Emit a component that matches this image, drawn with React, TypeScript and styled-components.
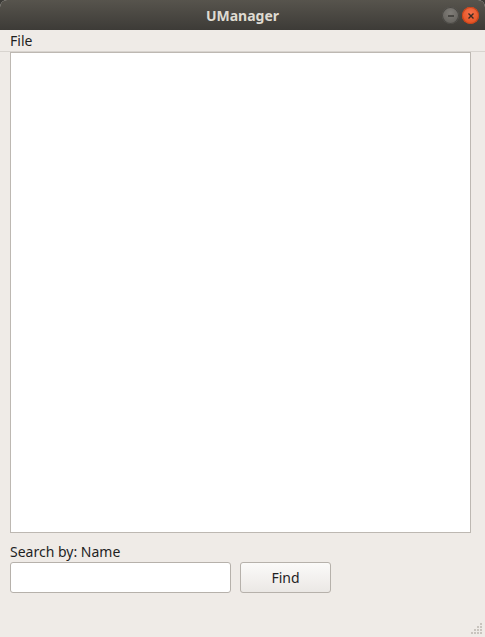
import React from "react"
import styled, { createGlobalStyle } from "styled-components"

const GlobalStyle = createGlobalStyle`
  html, body {
    margin: 0;
    padding: 0;
    background: #3c3b37;
  }
  body {
    font-family: "Noto Sans", "DejaVu Sans", sans-serif;
  }
`

const Window = styled.div`
  width: 485px;
  height: 637px;
  display: flex;
  flex-direction: column;
  background: #efebe7;
  border-radius: 7px 7px 0 0;
  overflow: hidden;
  position: relative;
`

const TitleBar = styled.div`
  height: 30px;
  flex: none;
  display: flex;
  align-items: center;
  justify-content: center;
  background: linear-gradient(#57544d, #3d3b37);
  position: relative;
`

const Title = styled.span`
  color: #dfdbd2;
  font-weight: bold;
  font-size: 14px;
`

const WindowButtons = styled.div`
  position: absolute;
  right: 6px;
  top: 7px;
  display: flex;
  gap: 3px;
`

const WinButton = styled.div<{ $close?: boolean }>`
  width: 17px;
  height: 17px;
  border-radius: 50%;
  display: flex;
  align-items: center;
  justify-content: center;
  background: ${p =>
    p.$close
      ? "radial-gradient(circle at 50% 35%, #f4704a, #df4a16)"
      : "radial-gradient(circle at 50% 35%, #807d78, #5c5a55)"};
  box-shadow: inset 0 0 0 1px ${p => (p.$close ? "#c9431a" : "#4a4844")};
`

const MenuBar = styled.div`
  height: 21px;
  flex: none;
  display: flex;
  align-items: center;
  padding: 0 10px;
  border-bottom: 1px solid #d8d4cf;
`

const MenuItem = styled.span`
  font-size: 14px;
  color: #1f1f1f;
`

const Content = styled.div`
  flex: 1;
  display: flex;
  flex-direction: column;
  padding: 0 14px 0 10px;
`

const ListBox = styled.div`
  height: 481px;
  background: #ffffff;
  border: 1px solid #bdb8b2;
  box-sizing: border-box;
`

const Label = styled.div`
  margin-top: 9px;
  font-size: 14px;
  color: #1f1f1f;
  height: 20px;
  line-height: 20px;
`

const SearchRow = styled.div`
  display: flex;
  gap: 9px;
`

const SearchInput = styled.input`
  width: 221px;
  height: 31px;
  box-sizing: border-box;
  border: 1px solid #b6b1ab;
  border-radius: 3px;
  background: #fff;
  outline: none;
  padding: 0 6px;
  font-family: inherit;
`

const Button = styled.button`
  width: 91px;
  height: 31px;
  box-sizing: border-box;
  border: 1px solid #b6b1ab;
  border-radius: 3px;
  background: linear-gradient(#fbfaf9, #ebe8e5);
  font-family: inherit;
  font-size: 14px;
  color: #1f1f1f;
  padding: 0;
`

const Grip = styled.svg`
  position: absolute;
  right: 2px;
  bottom: 2px;
`

function App() {
  const dots: [number, number][] = []
  for (let r = 0; r < 4; r++) {
    for (let c = 3 - r; c < 4; c++) {
      dots.push([c * 3, r * 3])
    }
  }
  return (
    <>
      <GlobalStyle />
      <Window>
        <TitleBar>
          <Title>UManager</Title>
          <WindowButtons>
            <WinButton>
              <svg width="10" height="10" viewBox="0 0 10 10">
                <line x1="2" y1="5" x2="8" y2="5" stroke="#3a3935" strokeWidth="1.4" />
              </svg>
            </WinButton>
            <WinButton $close>
              <svg width="10" height="10" viewBox="0 0 10 10">
                <path d="M2.5 2.5 L7.5 7.5 M7.5 2.5 L2.5 7.5" stroke="#3a2a22" strokeWidth="1.4" />
              </svg>
            </WinButton>
          </WindowButtons>
        </TitleBar>
        <MenuBar>
          <MenuItem>File</MenuItem>
        </MenuBar>
        <Content>
          <ListBox />
          <Label>Search by: Name</Label>
          <SearchRow>
            <SearchInput />
            <Button>Find</Button>
          </SearchRow>
        </Content>
        <Grip width="12" height="12" viewBox="0 0 12 12">
          {dots.map(([x, y], i) => (
            <rect key={i} x={x} y={y} width="2" height="2" fill="#c9c4be" />
          ))}
        </Grip>
      </Window>
    </>
  )
}

export default App
